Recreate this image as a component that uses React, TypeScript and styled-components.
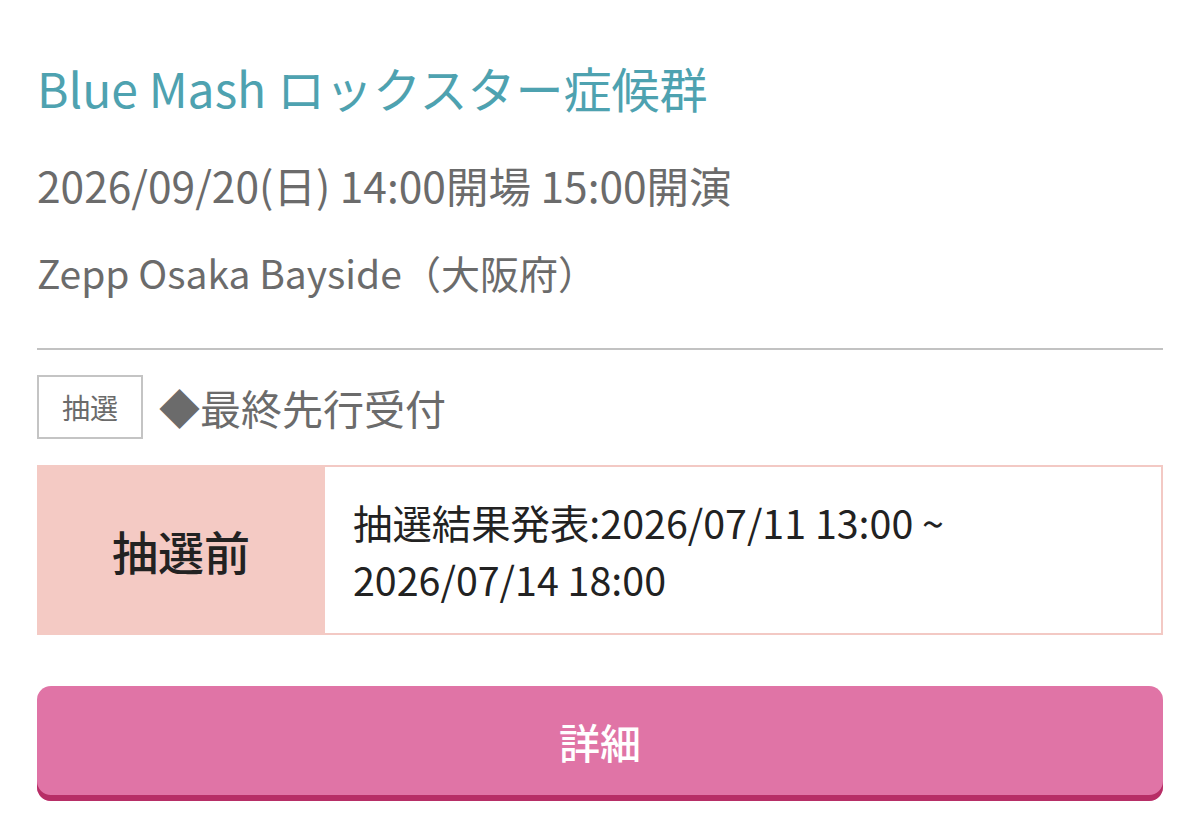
import React from "react";
import styled, { createGlobalStyle } from "styled-components";

const GlobalStyle = createGlobalStyle`
  html, body {
    margin: 0;
    padding: 0;
    background: #ffffff;
  }
  body {
    font-family: "Noto Sans CJK JP", "Noto Sans", sans-serif;
  }
`;

const Page = styled.div`
  width: 1126px;
  padding: 59px 37px 0 37px;
  display: flex;
  flex-direction: column;
`;

const Title = styled.h1`
  margin: 0;
  font-size: 48px;
  font-weight: 400;
  line-height: 56px;
  color: #4ea2b0;
  white-space: nowrap;
`;

const InfoLine = styled.p<{ $gap: number; $size: number }>`
  margin: ${(p) => p.$gap}px 0 0 0;
  font-size: ${(p) => p.$size}px;
  font-weight: 400;
  line-height: 46px;
  color: #6b6b6b;
  white-space: nowrap;
`;

const Divider = styled.hr`
  margin: 53px 0 0 0;
  border: none;
  height: 2px;
  background: #c2c2c2;
`;

const TypeRow = styled.div`
  margin-top: 25px;
  display: flex;
  align-items: center;
  gap: 16px;
`;

const TypeBadge = styled.span`
  box-sizing: border-box;
  width: 106px;
  height: 64px;
  border: 2px solid #c4c4c4;
  display: flex;
  align-items: center;
  justify-content: center;
  font-size: 28px;
  color: #6b6b6b;
`;

const TypeName = styled.span`
  font-size: 41px;
  color: #6b6b6b;
  line-height: 1;
`;

const StatusBox = styled.div`
  margin-top: 26px;
  display: grid;
  grid-template-columns: 288px 1fr;
  height: 170px;
  box-sizing: border-box;
`;

const StatusLabel = styled.div`
  background: #f4cac4;
  display: flex;
  align-items: center;
  justify-content: center;
  font-size: 46px;
  font-weight: 500;
  color: #222222;
`;

const StatusDetail = styled.div`
  border: 2px solid #f3c9c4;
  border-left: none;
  display: flex;
  align-items: center;
  padding: 0 28px;
  font-size: 39.4px;
  line-height: 57px;
  color: #222222;
  white-space: nowrap;
`;

const DetailButton = styled.button`
  margin-top: 51px;
  height: 115px;
  width: 100%;
  border: none;
  border-radius: 14px;
  background: #e074a6;
  box-shadow: inset 0 -6px 0 #b72e66;
  color: #ffffff;
  font-family: inherit;
  font-size: 41px;
  font-weight: 500;
  padding: 0 0 6px 0;
  cursor: pointer;
`;

export default function App() {
  return (
    <>
      <GlobalStyle />
      <Page>
        <Title>Blue Mash ロックスター症候群</Title>
        <InfoLine $gap={47} $size={42.5}>
          2026/09/20(日) 14:00開場 15:00開演
        </InfoLine>
        <InfoLine $gap={41} $size={39}>
          Zepp Osaka Bayside（大阪府）
        </InfoLine>
        <Divider />
        <TypeRow>
          <TypeBadge>抽選</TypeBadge>
          <TypeName>◆最終先行受付</TypeName>
        </TypeRow>
        <StatusBox>
          <StatusLabel>抽選前</StatusLabel>
          <StatusDetail>
            抽選結果発表:2026/07/11 13:00 ~
            <br />
            2026/07/14 18:00
          </StatusDetail>
        </StatusBox>
        <DetailButton>詳細</DetailButton>
      </Page>
    </>
  );
}
